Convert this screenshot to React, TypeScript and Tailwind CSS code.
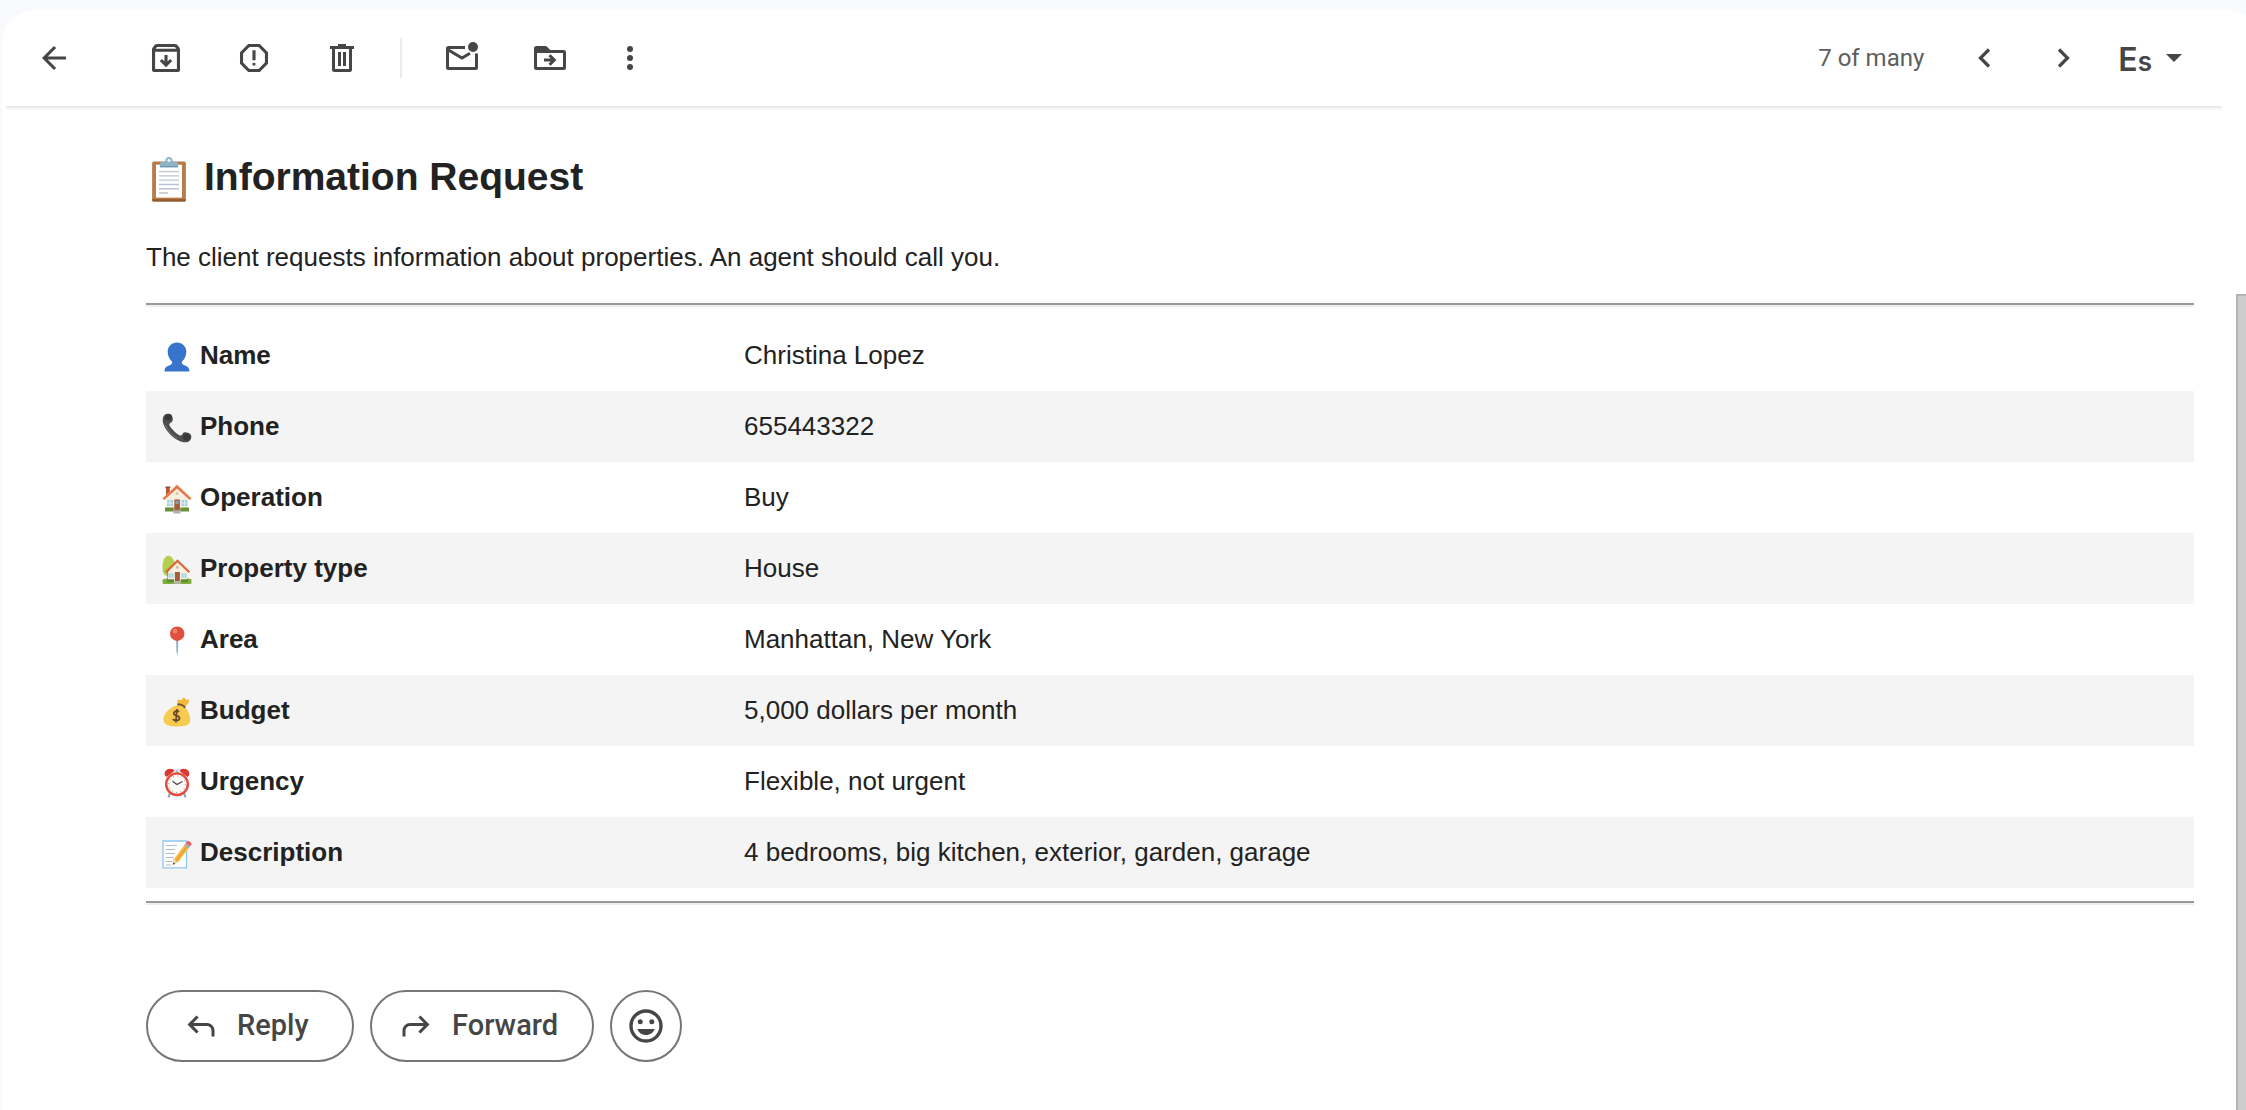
import type { ReactNode } from "react";

const ICON_BOX = "-34 -994 1028 1028";

function IconButton({ label, viewBox = "0 0 40 40", className = "", children }: {
  label: string;
  viewBox?: string;
  className?: string;
  children: ReactNode;
}) {
  return (
    <button type="button" aria-label={label} className={`size-10 shrink-0 text-[#444746] ${className}`}>
      <svg viewBox={viewBox} className="size-10" fill="currentColor">
        {children}
      </svg>
    </button>
  );
}

function Toolbar() {
  return (
    <header className="flex h-24 items-center pl-8 pr-[78px]">
      <IconButton label="Back" viewBox="-53 -1013 1066 1066">
        <path d="m313-440 224 224-57 56-320-320 320-320 57 56-224 224h487v80H313Z" />
      </IconButton>
      <div className="ml-[72px] flex items-center gap-12">
        <IconButton label="Archive" viewBox={ICON_BOX}>
          <path d="m480-240 160-160-56-56-64 64v-168h-80v168l-64-64-56 56 160 160ZM200-640v440h560v-440H200Zm-30 520q-50 0-50-50v-529q0-14 4.500-27t13.500-24l50-61q11-14 27.500-21.500T250-840h460q18 0 34.500 7.500T772-811l50 61q9 11 13.500 24t4.500 27v529q0 50-50 50H170Zm46-600h528l-34-40H250l-34 40Z" />
        </IconButton>
        <IconButton label="Report spam" viewBox={ICON_BOX}>
          <path d="M480-280q17 0 28.5-11.5T520-320q0-17-11.5-28.5T480-360q-17 0-28.5 11.5T440-320q0 17 11.5 28.5T480-280Zm-40-140h80v-260h-80v260ZM330-120 120-330v-300l210-210h300l210 210v300L630-120H330Zm34-80h232l164-164v-232L596-760H364L200-596v232l164 164Z" />
        </IconButton>
        <IconButton label="Delete">
          <path d="M16 6h8v2h8v3h-2v20.500a2.500 2.500 0 0 1-2.500 2.500h-15A2.500 2.500 0 0 1 10 31.500V11H8V8h8V6Zm-3 5v20h14V11H13Z" fillRule="evenodd" />
          <path d="M16 14h3v14h-3zM21 14h3v14h-3z" />
        </IconButton>
      </div>
      <div className="ml-[38px] h-10 w-0.5 bg-[#ececec]" />
      <div className="ml-10 flex items-center gap-12">
        <IconButton label="Mark as unread">
          <circle cx="31" cy="9" r="5" />
          <path d="M23 9.500H6.500a1 1 0 0 0-1 1v19a1 1 0 0 0 1 1h27a1 1 0 0 0 1-1V15.500M5.500 11.500 20 20l8-4.700" fill="none" stroke="currentColor" strokeWidth="3" />
        </IconButton>
        <IconButton label="Move to">
          <path d="M4 10.500A2.500 2.500 0 0 1 6.500 8h8.800c.8 0 1.400.3 2 .9L20.200 12h13.300a2.500 2.500 0 0 1 2.500 2.500v15a2.500 2.500 0 0 1-2.500 2.500h-27A2.500 2.500 0 0 1 4 29.500v-19ZM7 15v14h26V15H7Z" fillRule="evenodd" />
          <path d="M14 22h10.500M19.500 17.200l4.800 4.800-4.800 4.800" fill="none" stroke="currentColor" strokeWidth="3" />
        </IconButton>
      </div>
      <IconButton label="More" className="ml-10">
        <circle cx="20" cy="11" r="3" />
        <circle cx="20" cy="20" r="3" />
        <circle cx="20" cy="29" r="3" />
      </IconButton>

      <span className="ml-auto font-[Roboto,sans-serif] text-2xl text-[#5e5e5e]">7 of many</span>
      <div className="ml-10 flex items-center gap-10">
        <IconButton label="Newer">
          <path d="m25 11.500-8.500 8.500 8.500 8.500" fill="none" stroke="currentColor" strokeWidth="3.200" />
        </IconButton>
        <IconButton label="Older">
          <path d="m15 11.500 8.500 8.500-8.500 8.500" fill="none" stroke="currentColor" strokeWidth="3.200" />
        </IconButton>
      </div>
      <button type="button" aria-label="Input tools" className="ml-[34px] flex h-10 items-center gap-3.5 text-[#444746]">
        <span className="flex items-baseline pt-1.5 font-[Inter,sans-serif] font-semibold leading-10">
          <span className="text-[32px]">E</span>
          <span className="text-[26px]">s</span>
        </span>
        <svg viewBox="0 0 16 8" className="h-2 w-4" fill="currentColor">
          <path d="M0 0h16L8 8Z" />
        </svg>
      </button>
    </header>
  );
}

// Emoji drawings, all on a 30x30 grid
function ClipboardArt() {
  return (
    <>
      <rect x="4" y="3" width="22" height="26" rx="1" fill="#b87a48" />
      <path d="M4 27.500h22v.6a1 1 0 0 1-1 1H5a1 1 0 0 1-1-1Z" fill="#8f5a30" />
      <rect x="6.500" y="5" width="17" height="21.500" fill="#fff" />
      <path d="M8.500 9.500h13M8.500 12.300h13M8.500 15.100h13M8.500 17.900h13M8.500 20.700h13M8.500 23.500h6" stroke="#b9c5cf" strokeWidth=".9" />
      <path d="M9 6.700V5c0-1.300.9-2 2.200-2h1.300C12.700 1 13.300 0 15 0s2.300 1 2.500 3h1.300c1.300 0 2.200.7 2.200 2v1.700Z" fill="#8fb4c6" />
      <circle cx="15" cy="2.200" r="1" fill="#f4f8fa" />
      <path d="M9.200 6.300h11.600" stroke="#6d95a9" strokeWidth=".8" />
    </>
  );
}

function PersonArt() {
  return (
    <path d="M15 .5c5.200 0 9.300 4 9.300 9.200 0 4-1.800 7.700-4.300 9.800-.7 2 .2 3 2.300 3.700 3 1 5.200 2.400 5.200 6.300h-25c0-3.900 2.200-5.300 5.200-6.300 2.100-.7 3-1.700 2.300-3.700-2.500-2.100-4.300-5.800-4.300-9.800C5.700 4.500 9.800.5 15 .5Z" fill="#3874cb" />
  );
}

function PhoneArt() {
  return (
    <>
      <path d="M2.500 2C4.500.4 8.700.5 9.700 2.300c1 2 1.700 4.500.6 6.200-1 1.200-2.800 1.300-3 2.900-.2 2.300 8.800 11.300 11.300 11.200 1.600 0 1.700-2 3-3 1.700-1 5 0 6.700 1.300 1.600 1.600 1.400 5-.6 6.900-2.400 2.200-7 2.100-11.600-.5C9.700 24.100 3.500 17.500 1.300 10.800.2 7 .6 3.800 2.500 2Z" fill="#4e4e4e" />
      <ellipse cx="6.200" cy="4.600" rx="3.600" ry="3" fill="#383838" />
      <ellipse cx="24.500" cy="24" rx="3.600" ry="3.600" fill="#383838" />
      <path d="M3.300 11.500c2 5.500 7 11 12 14" stroke="#7b7b7b" strokeWidth="1" fill="none" />
    </>
  );
}

function HouseArt() {
  return (
    <>
      <path d="M4 3.300h3.800V11H4z" fill="#b85c38" />
      <path d="M3.500 2.500h4.800v1.600H3.500z" fill="#8f4630" />
      <path d="M4.500 14 15 3.500 25.500 14v12.500h-21Z" fill="#f8efdf" />
      <path d="M15 .8 29.500 14.500l-1.700 1.600L15 4.500 2.200 16.100.5 14.500Z" fill="#df6b3f" />
      <path d="M15 .8 29.500 14.500l-.8.800L15 2.600 1.300 15.300l-.8-.8Z" fill="#f08b5d" />
      <path d="M5 16h6v6H5zM19.500 16h6v6h-6z" fill="#9fd6e3" />
      <path d="M8 16v6M5 19h6M22.500 16v6M19.500 19h6" stroke="#f4f8f8" strokeWidth=".7" />
      <path d="M12.300 15.500h5.600v11.300h-5.600z" fill="#a55c3c" />
      <path d="M13.500 17h3.200v3h-3.200z" fill="#8f9fae" />
      <circle cx="15" cy="9.500" r="1.600" fill="#d9c8b2" />
      <path d="M3 23.500h8.800v4H3zM18.300 23.500H27v4h-8.700z" fill="#6b8f37" />
      <path d="M11.500 26.500h7v3h-7z" fill="#aab0b5" />
    </>
  );
}

function GardenHouseArt() {
  return (
    <>
      <path d="M.5 12C.5 6 2.800.8 6.300.8c3.700 0 6.700 5 6.700 11.200 0 6-2 9-6.500 9S.5 18 .5 12Z" fill="#b4cf4b" />
      <path d="M5.500 14h1.800v13H5.500z" fill="#8c6239" />
      <path d="M.5 25c2-3 26-3 29-.5v3.200c0 1-1 1.300-2 1.300H2.500c-1 0-2-.5-2-1.500Z" fill="#7fae3b" />
      <path d="m6 17 9.500-10L25 17v9.500H6Z" fill="#f8efdf" />
      <path d="M15.500 4.200 28.200 16.500l-1.500 1.500L15.500 7.500 4.300 18l-1.500-1.500Z" fill="#dc6940" />
      <path d="M6.500 18.200h5v4.500h-5zM19.500 18.200h5v4.500h-5z" fill="#9fd6e3" />
      <path d="M9 18.200v4.500M22 18.200v4.500" stroke="#fff" strokeWidth=".6" />
      <path d="M12.900 17h5v9.500h-5z" fill="#a55c3c" />
      <circle cx="15.400" cy="12.500" r="1.400" fill="#c8b8a4" />
      <path d="M5 24.300h7v3H5zM18.800 24.300H26v3h-7.200z" fill="#5d8f2f" />
      <path d="M12.300 26h6l1 2.800h-8Z" fill="#b7b5b0" />
    </>
  );
}

function PinArt() {
  return (
    <>
      <path d="M14.100 13h2.200l-.3 12-.8 4.600-.8-4.600Z" fill="#8db3c5" />
      <circle cx="15.200" cy="7.700" r="7.200" fill="#e0503f" />
      <circle cx="13" cy="5.200" r="2.400" fill="#ee8271" />
    </>
  );
}

function MoneyBagArt() {
  return (
    <>
      <path d="M17.500 9.500c-1.500-2.500-3-5.500-1.600-6.800 1.300-1 2.400.7 3.500.4 1-.5 1-2.300 2.600-2.300 1.400 0 1.300 1.700 2.400 1.900 1 .1 2.200-.6 2.600.6.5 2-2 5-4.600 7.200Z" fill="#f0b93c" />
      <path d="M15.500 8.300c3-1.300 6.500 0 8.200 2.500 3 4 5.500 9.500 4.200 14-1 3.700-4.900 4.700-12.900 4.700S1.500 28 1.500 22.500c0-6.500 7-12.500 14-14.200Z" fill="#f7cb4f" />
      <path d="M15.200 7.500c3.300-.6 6.200.8 8 3.200" stroke="#7c5533" strokeWidth="1.800" fill="none" />
      <path d="M17.200 14.800c-1.600-1.400-5.400-.8-5.400 1.600 0 2.800 6 1.800 5.700 4.900-.3 2.600-4.800 2.900-6.700.9M14.900 12l-1 13.500" stroke="#6b482b" strokeWidth="1.800" fill="none" />
    </>
  );
}

function AlarmArt() {
  return (
    <>
      <path d="m8 25-1.600 4.500M22 25l1.600 4.500" stroke="#7aa7bb" strokeWidth="2" />
      <path d="M13.500 1.500h3v4h-3z" fill="#a6cfdf" />
      <path d="M3 7.500C1.500 4 4.500.8 8.300.8c2.200 0 3.700.9 4.200 2.200L4.500 9ZM27 7.500C28.500 4 25.500.8 21.700.8c-2.200 0-3.700.9-4.200 2.200l8 6Z" fill="#d5392f" />
      <circle cx="15" cy="16.200" r="12" fill="#e34b3e" />
      <circle cx="15" cy="16.200" r="9.600" fill="#fbfaf6" />
      <circle cx="15" cy="16.200" r="8.300" fill="none" stroke="#777" strokeWidth="1" strokeDasharray=".8 3.550" />
      <path d="m10.500 13.200 4.500 3.300 5.500-3" stroke="#454545" strokeWidth="1.200" fill="none" />
    </>
  );
}

function MemoArt() {
  return (
    <>
      <path d="M1 2h23.500v26.800H1z" fill="#fcfeff" stroke="#8fc7ee" strokeWidth="1.300" />
      <path d="M4 6.500h7c2 0 2-1 4 0M4 10.500h9M4 14.500h9M4 18.500h8M4 22.500h6M4 26h5" stroke="#a9b3bc" strokeWidth=".9" fill="none" />
      <path d="m10.700 25.800 1.300-5.500L23.500 4.500l4.200 3.200L16 23.300Z" fill="#f5b73d" />
      <path d="M14.200 21.800 25.700 6.200" stroke="#dd9429" strokeWidth="1" />
      <path d="m10.700 25.800 1.300-5.500 4 3Z" fill="#f1d4a4" />
      <path d="m10.700 25.800.6-2.400 1.800 1.300Z" fill="#424242" />
      <path d="m22.300 6.200 1.400-1.900 4.200 3.200-1.400 1.900Z" fill="#9ab4bf" />
      <path d="m23.700 4.300 1.500-2c1.300-1.300 5 1.200 4.200 3.100l-1.500 2.100Z" fill="#e9646a" />
    </>
  );
}

const rows = [
  { label: "Name", value: "Christina Lopez", art: <PersonArt /> },
  { label: "Phone", value: "655443322", art: <PhoneArt /> },
  { label: "Operation", value: "Buy", art: <HouseArt /> },
  { label: "Property type", value: "House", art: <GardenHouseArt /> },
  { label: "Area", value: "Manhattan, New York", art: <PinArt /> },
  { label: "Budget", value: "5,000 dollars per month", art: <MoneyBagArt /> },
  { label: "Urgency", value: "Flexible, not urgent", art: <AlarmArt /> },
  { label: "Description", value: "4 bedrooms, big kitchen, exterior, garden, garage", art: <MemoArt /> },
];

function Divider() {
  return <hr className="h-1 border-0 border-t-2 border-[#9a9a9a] bg-[#eeeeee]" />;
}

function Message() {
  return (
    <article className="font-['Liberation_Sans',Arial,sans-serif] text-[26px] leading-[31px] text-[#222222]">
      <h2 className="text-[39px] font-bold leading-[46px]">
        <svg viewBox="0 0 30 30" className="-my-2 mr-3 inline size-[46px] align-middle">
          <ClipboardArt />
        </svg>
        Information Request
      </h2>
      <p className="mb-[30px] mt-[42px]">
        The client requests information about properties. An agent should call you.
      </p>
      <Divider />
      <table className="my-[13px] w-full table-fixed border-collapse text-left">
        <tbody>
          {rows.map((row) => (
            <tr key={row.label} className="even:bg-[#f4f4f4]">
              <th scope="row" className="w-[582px] px-4 py-5 font-bold">
                <svg viewBox="0 0 30 30" className="-my-2 mr-2 inline size-[30px] align-middle">
                  {row.art}
                </svg>
                {row.label}
              </th>
              <td className="px-4 py-5">{row.value}</td>
            </tr>
          ))}
        </tbody>
      </table>
      <Divider />
    </article>
  );
}

function ReplyBar() {
  return (
    <div className="mt-[85px] flex gap-4 font-[Roboto,sans-serif] text-[29px] font-medium text-[#444746]">
      <button type="button" className="flex h-[72px] w-52 items-center gap-[18px] rounded-full border-2 border-[#747775] pl-[35px]">
        <svg viewBox="0 -960 960 960" className="size-9" fill="currentColor">
          <path d="M760-200v-160q0-50-35-85t-85-35H273l144 144-57 56-240-240 240-240 57 56-144 144h367q83 0 141.500 58.500T840-360v160h-80Z" />
        </svg>
        Reply
      </button>
      <button type="button" className="flex h-[72px] w-56 items-center gap-[18px] rounded-full border-2 border-[#747775] pl-[26px]">
        <svg viewBox="0 -960 960 960" className="size-9" fill="currentColor">
          <path d="M200-200v-160q0-50 35-85t85-35h367L543-336l57 56 240-240-240-240-57 56 144 144H320q-83 0-141.500 58.500T120-360v160h80Z" />
        </svg>
        Forward
      </button>
      <button type="button" aria-label="Add reaction" className="flex size-[72px] items-center justify-center rounded-full border-2 border-[#747775]">
        <svg viewBox="0 0 40 40" className="size-10" fill="currentColor">
          <circle cx="20" cy="20" r="15" fill="none" stroke="currentColor" strokeWidth="3.400" />
          <circle cx="14.200" cy="15.800" r="2.500" />
          <circle cx="25.800" cy="15.800" r="2.500" />
          <path d="M11.300 23h17.400c-1.300 3.700-4.600 6-8.700 6s-7.400-2.300-8.700-6Z" />
        </svg>
      </button>
    </div>
  );
}

export default function App() {
  return (
    <div className="flex min-h-screen flex-col overflow-hidden bg-[#f8fafd] pl-0.5 pt-2.5">
      <div className="-mr-3.5 flex flex-1 flex-col rounded-t-[32px] bg-white">
        <Toolbar />
        <div className="ml-1 mr-[38px] h-1 bg-linear-to-b from-[#e6e6e6] to-white" />
        <div className="mr-3.5 flex flex-1">
          <main className="flex-1 pl-36 pr-[42px] pt-11">
            <Message />
            <ReplyBar />
          </main>
          <div className="flex w-2.5 flex-col pt-[184px]">
            <div className="flex-1 border-l-2 border-t-2 border-[#b4b4b4] bg-[#cccccc]" />
          </div>
        </div>
      </div>
    </div>
  );
}
